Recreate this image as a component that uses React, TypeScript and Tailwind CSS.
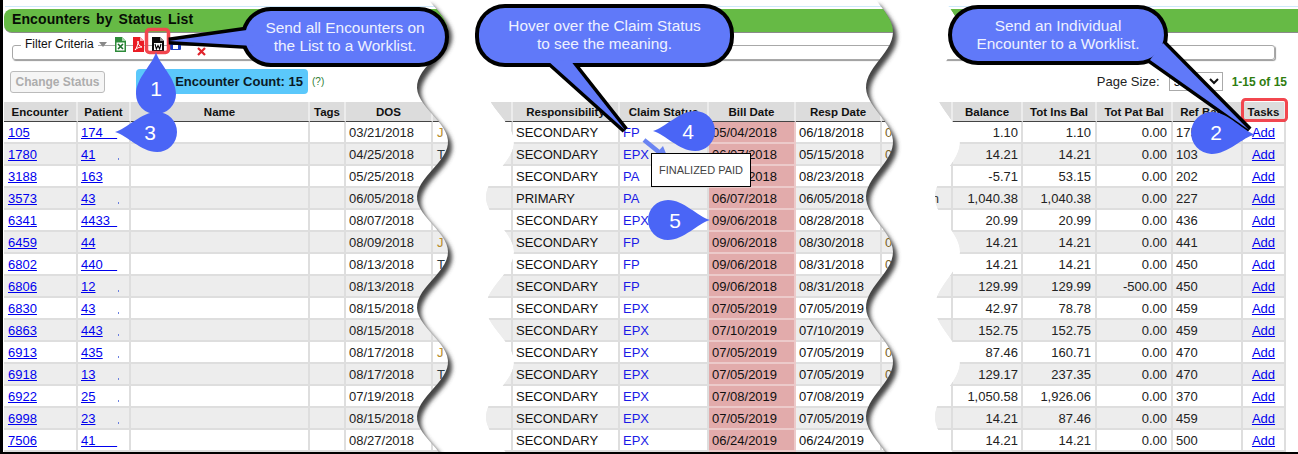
import React from "react";

type Row = {
  enc: string;
  pat: string;
  dot?: boolean;
  dos: string;
  a?: string;
  resp: string;
  claim: string;
  bill: string;
  respDate: string;
  b?: string;
  bEnd?: string;
  bal: string;
  ins: string;
  patBal: string;
  ref: string;
};

const nb = "\u00a0";

const rows: Row[] = [
  { enc: "105", pat: `174${nb}${nb}${nb}${nb}`, dos: "03/21/2018", a: "J", resp: "SECONDARY", claim: "FP", bill: "05/04/2018", respDate: "06/18/2018", b: "0", bal: "1.10", ins: "1.10", patBal: "0.00", ref: "175" },
  { enc: "1780", pat: "41", dot: true, dos: "04/25/2018", a: "T", resp: "SECONDARY", claim: "EPX", bill: "06/07/2018", respDate: "05/15/2018", b: "0", bal: "14.21", ins: "14.21", patBal: "0.00", ref: "103" },
  { enc: "3188", pat: "163", dos: "05/25/2018", resp: "SECONDARY", claim: "PA", bill: "09/06/2018", respDate: "08/23/2018", bal: "-5.71", ins: "53.15", patBal: "0.00", ref: "202" },
  { enc: "3573", pat: "43", dot: true, dos: "06/05/2018", resp: "PRIMARY", claim: "PA", bill: "06/07/2018", respDate: "06/05/2018", bEnd: "n", bal: "1,040.38", ins: "1,040.38", patBal: "0.00", ref: "227" },
  { enc: "6341", pat: `4433${nb}${nb}`, dos: "08/07/2018", resp: "SECONDARY", claim: "EPX", bill: "09/06/2018", respDate: "08/28/2018", bal: "20.99", ins: "20.99", patBal: "0.00", ref: "436" },
  { enc: "6459", pat: "44", dos: "08/09/2018", a: "J", resp: "SECONDARY", claim: "FP", bill: "09/06/2018", respDate: "08/30/2018", b: "0", bal: "14.21", ins: "14.21", patBal: "0.00", ref: "441" },
  { enc: "6802", pat: `440${nb}${nb}${nb}${nb}`, dos: "08/13/2018", a: "T", resp: "SECONDARY", claim: "FP", bill: "09/06/2018", respDate: "08/31/2018", b: "0", bal: "14.21", ins: "14.21", patBal: "0.00", ref: "450" },
  { enc: "6806", pat: "12", dot: true, dos: "08/13/2018", resp: "SECONDARY", claim: "FP", bill: "09/06/2018", respDate: "08/31/2018", bal: "129.99", ins: "129.99", patBal: "-500.00", ref: "450" },
  { enc: "6830", pat: "43", dot: true, dos: "08/15/2018", resp: "SECONDARY", claim: "EPX", bill: "07/05/2019", respDate: "07/05/2019", bal: "42.97", ins: "78.78", patBal: "0.00", ref: "459" },
  { enc: "6863", pat: "443", dot: true, dos: "08/15/2018", resp: "SECONDARY", claim: "EPX", bill: "07/10/2019", respDate: "07/10/2019", bal: "152.75", ins: "152.75", patBal: "0.00", ref: "459" },
  { enc: "6913", pat: "435", dot: true, dos: "08/17/2018", a: "J", resp: "SECONDARY", claim: "EPX", bill: "07/05/2019", respDate: "07/05/2019", b: "0", bal: "87.46", ins: "160.71", patBal: "0.00", ref: "470" },
  { enc: "6918", pat: "13", dot: true, dos: "08/17/2018", a: "T", resp: "SECONDARY", claim: "EPX", bill: "07/05/2019", respDate: "07/05/2019", b: "0", bal: "129.17", ins: "237.35", patBal: "0.00", ref: "470" },
  { enc: "6922", pat: "25", dot: true, dos: "07/19/2018", resp: "SECONDARY", claim: "EPX", bill: "07/08/2019", respDate: "07/08/2019", bal: "1,050.58", ins: "1,926.06", patBal: "0.00", ref: "370" },
  { enc: "6998", pat: "23", dot: true, dos: "08/15/2018", resp: "SECONDARY", claim: "EPX", bill: "07/05/2019", respDate: "07/05/2019", bal: "14.21", ins: "87.46", patBal: "0.00", ref: "459" },
  { enc: "7506", pat: `41${nb}${nb}${nb}${nb}${nb}${nb}`, dos: "08/27/2018", resp: "SECONDARY", claim: "EPX", bill: "06/24/2019", respDate: "06/24/2019", bal: "14.21", ins: "14.21", patBal: "0.00", ref: "500" },
];

const headers = [
  { label: "Encounter", w: "w-[74px]" },
  { label: "Patient", w: "w-[53px]" },
  { label: "Name", w: "w-[179px]" },
  { label: "Tags", w: "w-[36px]" },
  { label: "DOS", w: "w-[87px]" },
  { label: "", w: "w-[80px]" },
  { label: "Responsibility", w: "w-[107px]" },
  { label: "Claim Status", w: "w-[89px]" },
  { label: "Bill Date", w: "w-[87px]" },
  { label: "Resp Date", w: "w-[86px]" },
  { label: "", w: "w-[71px]" },
  { label: "Balance", w: "w-[70px]" },
  { label: "Tot Ins Bal", w: "w-[74px]" },
  { label: "Tot Pat Bal", w: "w-[76px]" },
  { label: "Ref Batch", w: "w-[70px]" },
  { label: "Tasks", w: "w-[43px]" },
];

// one edge of a torn page: same wave for both tears, minima at y = 87, 197, 307, 417
const edge = (c: number, a: number) => {
  const pts: string[] = [];
  for (let y = 0; y <= 452; y += 4) {
    const x = c - a * Math.cos((2 * Math.PI * (y - 87)) / 110);
    pts.push(`${x.toFixed(1)} ${y}`);
  }
  return pts;
};

const bandPath = (lc: number, la: number, rc: number, ra: number) =>
  "M" + edge(lc, la).join(" L") + " L" + edge(rc, ra).reverse().join(" L") + " Z";

const pagePath = (lc: number, la: number) => "M" + edge(lc, la).join(" L") + ` L${lc - 60} 452 L${lc - 60} 0 Z`;

const Tear = ({ id, lc, la, rc, ra }: { id: string; lc: number; la: number; rc: number; ra: number }) => (
  <g>
    <clipPath id={id}>
      <path d={bandPath(lc, la, rc, ra)} />
    </clipPath>
    <g clipPath={`url(#${id})`}>
      <path d={bandPath(lc, la, rc, ra)} fill="#fff" />
      <path d={pagePath(lc, la)} fill="#444" transform="translate(4 5)" filter="url(#soft)" />
    </g>
  </g>
);

const Bubble = ({ x, y, w, h, tail }: { x: number; y: number; w: number; h: number; tail: string }) => (
  <g>
    <rect x={x} y={y} width={w} height={h} rx={26} fill="#000" stroke="#000" strokeWidth={8} />
    <path d={tail} fill="#000" stroke="#000" strokeWidth={7} strokeLinejoin="miter" />
    <rect x={x} y={y} width={w} height={h} rx={26} fill="#6079f9" />
    <path d={tail} fill="#6079f9" />
  </g>
);

// teardrop with its circle centred on cx,cy; the tip points left before rotation
const Drop = ({ cx, cy, rot, r = 20 }: { cx: number; cy: number; rot: number; r?: number }) => (
  <path
    transform={`translate(${cx} ${cy}) rotate(${rot})`}
    d={`M${-r - 20} 0 C${-r - 8} -3 -14 ${-r} 2 ${-r} A${r} ${r} 0 0 1 2 ${r} C-14 ${r} ${-r - 8} 3 ${-r - 20} 0 Z`}
    fill="#4a65f6"
  />
);

const Overlay = () => (
  <svg className="absolute left-0 top-0" width={1298} height={452} viewBox="0 0 1298 452">
    <defs>
      <filter id="soft" filterUnits="userSpaceOnUse" x="300" y="-20" width="700" height="500">
        <feGaussianBlur stdDeviation="2.2" />
      </filter>
    </defs>
    <Tear id="tear1" lc={432.5} la={15.5} rc={500} ra={14} />
    <Tear id="tear2" lc={879.5} la={13.5} rc={947.5} ra={12.5} />

    {/* word icon highlight */}
    <rect x={146.5} y={29.5} width={22} height={23} rx={3} fill="none" stroke="#f2474f" strokeWidth={3.5} />
    {/* tasks highlight */}
    <rect x={1242.5} y={99.5} width={44} height={21} rx={3} fill="none" stroke="#f2474f" strokeWidth={3} />

    <Bubble x={245} y={11} w={200} h={52} tail="M254 29 L169 41 L254 46 Z" />
    <Bubble x={479} y={8} w={251} h={55} tail="M548 61 L625 130 L570 60 Z" />
    <Bubble x={952} y={9} w={212} h={52} tail="M1150 60 L1249 130 L1163 43 Z" />

    <Drop cx={156} cy={92} rot={90} />
    <Drop cx={155} cy={132} rot={0} />
    <Drop cx={693} cy={131} rot={0} />
    <Drop cx={670} cy={220} rot={180} />
    <Drop cx={1214} cy={133} rot={182} r={21} />

    {/* arrow towards the tooltip */}
    <path d="M644 140 L660 153" stroke="#6a84f2" strokeWidth={4.5} fill="none" />
    <path d="M669 161 L653 157 L663 146 Z" fill="#6a84f2" />
  </svg>
);

const ExcelIcon = () => (
  <svg width={11} height={15} viewBox="0 0 11 15">
    <path d="M0 0h7l4 4v11H0z" fill="#2e8b3a" />
    <path d="M7 0l4 4H7z" fill="#a5d6a7" />
    <rect x={1.5} y={5.5} width={8} height={8} fill="#fff" />
    <path d="M3 7l5 5M8 7l-5 5" stroke="#1b6e2a" strokeWidth={1.6} />
  </svg>
);

const PdfIcon = () => (
  <svg width={11} height={15} viewBox="0 0 11 15">
    <path d="M0 0h7l4 4v11H0z" fill="#ea1c24" />
    <path d="M7 0l4 4H7z" fill="#f6a5a8" />
    <path d="M2 13c2-2 3-6 3-9 0 3 1 5 4 6-3 0-5 1-7 3z" fill="none" stroke="#fff" strokeWidth={1} />
  </svg>
);

const WordIcon = () => (
  <svg width={12} height={15} viewBox="0 0 12 15">
    <path d="M0 0h8l4 4v11H0z" fill="#0b0b0b" />
    <path d="M8 0l4 4H8z" fill="#8f8f8f" />
    <rect x={2} y={6} width={8} height={7} fill="#fff" />
    <path d="M3 7l1.4 5L6 8.5 7.6 12 9 7" stroke="#000" strokeWidth={1.1} fill="none" />
  </svg>
);

const SaveIcon = () => (
  <svg width={11} height={11} viewBox="0 0 11 11">
    <rect width={11} height={11} rx={1} fill="#1c3fc4" />
    <rect x={3} y={6} width={5} height={4} fill="#fff" />
  </svg>
);

const ClearIcon = () => (
  <svg width={9} height={9} viewBox="0 0 9 9">
    <path d="M1 1l7 7M8 1L1 8" stroke="#e0232b" strokeWidth={2.2} />
  </svg>
);

const cell = "border-r-2 border-b-2 border-[#dedede] p-0 overflow-hidden whitespace-nowrap";

export default function App() {
  return (
    <div className="relative w-[1298px] h-[454px] overflow-hidden bg-black pl-[3px] pb-[2px] flex font-['Liberation_Sans',Arial,sans-serif] text-[#111]">
      <div className="flex-1 bg-white flex flex-col">
        <div className="mt-[6px] h-px ml-[2px] bg-[#cfe9fb]" />
        <div className="mt-[2px] ml-px h-[24px] flex items-center rounded-l-[8px] bg-[#66ba45] border-b border-[#8a8a8a] pl-[8px] pb-[2px]">
          <span className="font-bold text-[14px] tracking-[0.1px] [word-spacing:2px] text-[#070d05]">
            Encounters by Status List
          </span>
        </div>

        <div className="relative mt-[12px] ml-[9px] w-[1263px] h-[15px] border border-[#a8a8a8] rounded-[3px] shadow-[1px_1px_1px_#999]">
          <div className="absolute left-[8px] top-[-11px] flex items-center h-[18px]">
            <span className="bg-white pl-[4px] pr-[4px] text-[12px]">Filter Criteria</span>
            <span className="ml-px w-0 h-0 border-x-[4px] border-x-transparent border-t-[5px] border-t-[#888]" />
            <div className="ml-[8px] flex items-center">
              <ExcelIcon />
              <span className="ml-[7px] flex">
                <PdfIcon />
              </span>
              <span className="ml-[8px] flex">
                <WordIcon />
              </span>
              <span className="ml-[6px] flex">
                <SaveIcon />
              </span>
              <span className="ml-[16px] mt-[14px] flex">
                <ClearIcon />
              </span>
            </div>
          </div>
        </div>

        <div className="mt-[9px] h-[25px] flex items-center pl-[7px] pr-[11px]">
          <button className="w-[95px] h-[22px] rounded-[3px] border border-[#bbb] bg-[#f5f5f5] text-[#adadad] text-[12px] font-bold">
            Change Status
          </button>
          <div className="ml-[31px] w-[172px] h-[25px] rounded-[4px] bg-[#5bc8fb] flex items-center justify-end pr-[5px] font-bold text-[13px] text-[#0a1a26]">
            Encounter Count: 15
          </div>
          <span className="ml-[4px] text-[10px] text-[#2f7d32]">(?)</span>
          <span className="ml-auto text-[13px] text-[#222]">Page Size:</span>
          <select
            defaultValue="50"
            className="ml-[9px] w-[54px] h-[19px] border border-[#aaa] bg-white text-[12px] appearance-auto"
          >
            <option value="50">50</option>
          </select>
          <span className="ml-[9px] text-[12px] font-bold text-[#2f7d0f]">1-15 of 15</span>
        </div>

        <table className="mt-[8px] ml-px w-[1282px] table-fixed border-separate border-spacing-0 text-[13px] leading-none">
          <colgroup>
            {headers.map((h, i) => (
              <col key={i} className={h.w} />
            ))}
          </colgroup>
          <thead>
            <tr className="h-[20px] bg-[#dcdcdc]">
              {headers.map((h, i) => (
                <th key={i} className="border-r-2 border-[#ececec] border-b border-b-[#444] p-0 pt-[2px] text-[11.5px] font-bold text-center text-[#111] whitespace-nowrap overflow-hidden">
                  {h.label}
                </th>
              ))}
            </tr>
          </thead>
          <tbody>
            {rows.map((r, i) => (
              <tr key={r.enc} className={i % 2 === 0 ? "h-[22px] bg-white" : "h-[22px] bg-[#ededed]"}>
                <td className={`${cell} pl-[4px]`}>
                  <a href="#" className="text-[#0000ee] underline">{r.enc}</a>
                </td>
                <td className={`${cell} pl-[3px]`}>
                  <span className="inline-flex w-[38px] justify-between items-end">
                    <a href="#" className="text-[#0000ee] underline">{r.pat}</a>
                    {r.dot && <span className="w-px h-[2px] mb-px bg-[#6a7fe0]" />}
                  </span>
                </td>
                <td className={cell} />
                <td className={cell} />
                <td className={`${cell} pl-[3px] text-[#222]`}>{r.dos}</td>
                <td className={`${cell} pl-[4px] ${r.a === "J" ? "text-[#b58a2a]" : "text-[#2d3a40]"}`}>{r.a}</td>
                <td className={`${cell} pl-[3px]`}>{r.resp}</td>
                <td className={`${cell} pl-[3px] text-[#1a1ae6]`}>{r.claim}</td>
                <td className={`${cell} pl-[3px] bg-[#e2abab] border-[#eccaca]`}>{r.bill}</td>
                <td className={`${cell} pl-[3px]`}>{r.respDate}</td>
                <td className={`${cell} pl-[3px] text-[#7a6226]`}>
                  <span className="flex justify-between pr-[12px]">
                    <span>{r.b}</span>
                    <span className="text-[#333]">{r.bEnd}</span>
                  </span>
                </td>
                <td className={`${cell} text-right pr-[3px] text-[#222]`}>{r.bal}</td>
                <td className={`${cell} text-right pr-[4px] text-[#222]`}>{r.ins}</td>
                <td className={`${cell} text-right pr-[4px] text-[#222]`}>{r.patBal}</td>
                <td className={`${cell} pl-[3px] text-[#222]`}>{r.ref}</td>
                <td className={`${cell} text-center`}>
                  <a href="#" className="text-[#0000ee] underline">Add</a>
                </td>
              </tr>
            ))}
          </tbody>
        </table>
      </div>

      <Overlay />

      {/* tooltip */}
      <div className="absolute left-[651px] top-[153px] w-[100px] h-[34px] bg-white border-[1.5px] border-black flex items-center justify-center text-[11px] text-[#444]">
        FINALIZED PAID
      </div>

      {/* callout texts */}
      <div className="absolute left-[241px] top-[19px] w-[208px] text-center text-[15.4px] leading-[18px] text-[#eef1ff]">
        Send all Encounters on
        <br />
        the List to a Worklist.
      </div>
      <div className="absolute left-[475px] top-[17px] w-[259px] text-center text-[15.4px] leading-[18px] text-[#eef1ff]">
        Hover over the Claim Status
        <br />
        to see the meaning.
      </div>
      <div className="absolute left-[948px] top-[17px] w-[220px] text-center text-[15.4px] leading-[18px] text-[#eef1ff]">
        Send an Individual
        <br />
        Encounter to a Worklist.
      </div>

      {/* marker numbers */}
      <span className="absolute left-[146px] top-[77px] w-[20px] text-center text-[21px] leading-[24px] text-white">1</span>
      <span className="absolute left-[1206px] top-[121px] w-[20px] text-center text-[21px] leading-[24px] text-white">2</span>
      <span className="absolute left-[140px] top-[121px] w-[20px] text-center text-[21px] leading-[24px] text-white">3</span>
      <span className="absolute left-[678px] top-[120px] w-[20px] text-center text-[21px] leading-[24px] text-white">4</span>
      <span className="absolute left-[665px] top-[209px] w-[20px] text-center text-[21px] leading-[24px] text-white">5</span>
    </div>
  );
}
